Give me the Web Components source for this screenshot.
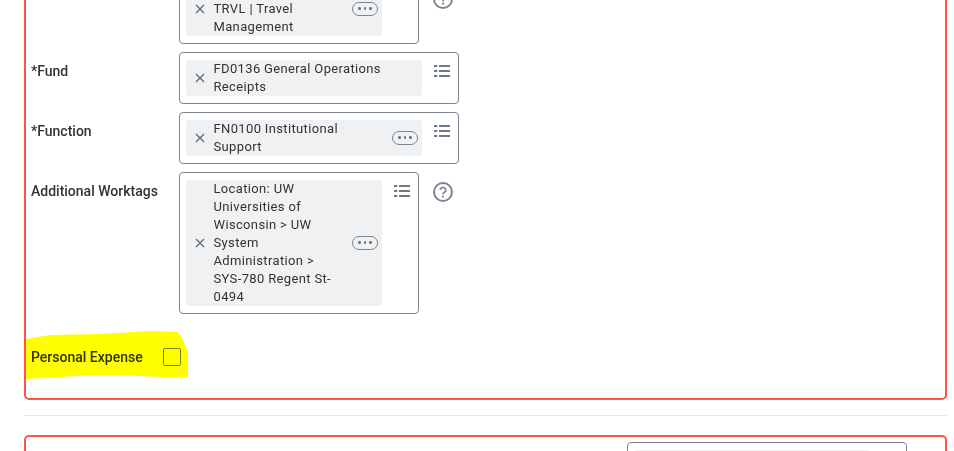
<!DOCTYPE html>
<html>
<head>
<meta charset="utf-8">
<style>
  html, body { margin: 0; height: 451px; overflow: hidden; background: #fff; }
  body { font-family: Roboto, "Liberation Sans", sans-serif; color: #333; }
</style>
</head>
<body>
<expense-page>
  <expense-card>
    <form-field label="" style="--help-top: 15px">
      <tag-box width="240">
        <tag-chip more><br>TRVL | Travel Management</tag-chip>
      </tag-box>
      <help-icon slot="after"></help-icon>
    </form-field>
    <form-field label="*Fund">
      <tag-box width="280" list>
        <tag-chip>FD0136 General Operations Receipts</tag-chip>
      </tag-box>
    </form-field>
    <form-field label="*Function">
      <tag-box width="280" list>
        <tag-chip more>FN0100 Institutional Support</tag-chip>
      </tag-box>
    </form-field>
    <form-field label="Additional Worktags">
      <tag-box width="240" list>
        <tag-chip more>Location: UW Universities of Wisconsin &gt; UW System Administration &gt; SYS-780 Regent St-0494</tag-chip>
      </tag-box>
      <help-icon slot="after"></help-icon>
    </form-field>
    <check-field label="Personal Expense"></check-field>
  </expense-card>
  <expense-card end>
    <tag-box width="280" list>
      <tag-chip></tag-chip>
    </tag-box>
  </expense-card>
</expense-page>

<script>
class ExpensePage extends HTMLElement {
  constructor() {
    super();
    this.attachShadow({ mode: "open" }).innerHTML = `
      <style>
        :host { display: flex; flex-direction: column; margin: -56px 7px 0 24px; }
        .line { height: 1px; background: #e6e8ea; margin: 15px 0 19px; }
      </style>
    `;
    // each card gets its own slot, with the divider drawn between them
    const cards = [...this.querySelectorAll("expense-card")];
    cards.forEach((card, i) => {
      const slotName = "card" + i;
      card.slot = slotName;
      const slot = document.createElement("slot");
      slot.name = slotName;
      this.shadowRoot.appendChild(slot);
      if (i < cards.length - 1) {
        const line = document.createElement("div");
        line.className = "line";
        this.shadowRoot.appendChild(line);
      }
    });
  }
}

class ExpenseCard extends HTMLElement {
  constructor() {
    super();
    this.attachShadow({ mode: "open" }).innerHTML = `
      <style>
        :host {
          display: flex;
          flex-direction: column;
          gap: 8px;
          box-sizing: border-box;
          border: 2px solid #ff5347;
          border-radius: 5px;
          padding: 28px 38px 0 5px;
        }
        :host([end]) { align-items: flex-end; padding-top: 5px; }
      </style>
      <slot></slot>
    `;
  }
}

class FormField extends HTMLElement {
  constructor() {
    super();
    this.attachShadow({ mode: "open" }).innerHTML = `
      <style>
        :host { display: flex; align-items: flex-start; }
        .label {
          width: 148px;
          padding-top: 10px;
          font-size: 14px;
          font-weight: 500;
          line-height: 18px;
          color: #333;
        }
        .after { margin-left: 14px; padding-top: var(--help-top, 10px); display: flex; }
      </style>
      <div class="label"></div>
      <slot></slot>
      <div class="after"><slot name="after"></slot></div>
    `;
    this.shadowRoot.querySelector(".label").textContent = this.getAttribute("label");
  }
}

class TagBox extends HTMLElement {
  constructor() {
    super();
    this.attachShadow({ mode: "open" }).innerHTML = `
      <style>
        :host {
          display: flex;
          align-items: flex-start;
          box-sizing: border-box;
          border: 1px solid #7b858f;
          border-radius: 4px;
          padding: 7px 7px 7px 6px;
          background: #fff;
        }
        .tags { flex: 1; min-width: 0; }
        svg { flex: none; display: block; width: 18px; height: 18px; margin-left: 11px; margin-top: 2px; }
      </style>
      <div class="tags"><slot></slot></div>
      <svg viewBox="0 0 18 18" fill="#6f7a85">
        <path d="M1 3.1h3.3v1.8H1zM6 3.1h11v1.8H6zM1 8.1h3.3v1.8H1zM6 8.1h11v1.8H6zM1 13.1h3.3v1.8H1zM6 13.1h11v1.8H6z"/>
      </svg>
    `;
    this.style.width = this.getAttribute("width") + "px";
  }
}

class TagChip extends HTMLElement {
  constructor() {
    super();
    this.attachShadow({ mode: "open" }).innerHTML = `
      <style>
        :host {
          display: flex;
          align-items: center;
          min-height: 36px;
          background: #f0f1f2;
          border-radius: 3px;
          font-size: 13px;
          line-height: 18px;
          letter-spacing: 0.35px;
          color: #333;
        }
        .x { flex: none; width: 10px; height: 10px; margin: 0 8.5px 0 9px; }
        .text { flex: 1; min-width: 0; padding-right: 6px; }
        .more {
          flex: none;
          display: none;
          box-sizing: border-box;
          width: 26px;
          height: 14px;
          margin: -1px 4px 0 3px;
          border: 1px solid #7b858f;
          border-radius: 7px;
          align-items: center;
          justify-content: center;
          gap: 3px;
        }
        .more i { width: 2.4px; height: 2.4px; border-radius: 50%; background: #6f7a85; }
        :host([more]) .more { display: flex; }
      </style>
      <svg class="x" viewBox="0 0 10 10" stroke="#5e6a75" stroke-width="1.3" fill="none">
        <path d="M1 1l8 8M9 1l-8 8"/>
      </svg>
      <div class="text"><slot></slot></div>
      <div class="more"><i></i><i></i><i></i></div>
    `;
  }
}

class HelpIcon extends HTMLElement {
  constructor() {
    super();
    this.attachShadow({ mode: "open" }).innerHTML = `
      <style>
        :host { display: block; width: 20px; height: 20px; }
        svg { display: block; }
      </style>
      <svg width="20" height="20" viewBox="0 0 20 20" fill="none" stroke="#7b858f" stroke-width="2">
        <circle cx="10" cy="10" r="9"/>
        <path d="M7.2 8a2.8 2.6 0 1 1 4.3 2.2c-1 .6-1.5 1.1-1.5 2" stroke-width="1.7"/>
        <circle cx="10" cy="14.6" r="1.1" fill="#7b858f" stroke="none"/>
      </svg>
    `;
  }
}

class CheckField extends HTMLElement {
  constructor() {
    super();
    this.attachShadow({ mode: "open" }).innerHTML = `
      <style>
        :host {
          display: flex;
          align-items: center;
          position: relative;
          gap: 20px;
          margin: 19px 0 25px;
          height: 32px;
          font-size: 14px;
          font-weight: 500;
          line-height: 18px;
          color: #333;
        }
        .box {
          width: 18px;
          height: 18px;
          box-sizing: border-box;
          border: 1px solid #7b858f;
          border-radius: 2px;
          background: #fff;
        }
        .marker {
          position: absolute;
          left: -5px;
          top: -11px;
          mix-blend-mode: multiply;
          pointer-events: none;
        }
      </style>
      <span class="label"></span>
      <span class="box"></span>
      <svg class="marker" width="163" height="50" viewBox="0 0 163 50">
        <path fill="#ffff00" d="M0 9L24 5L74 4L124 1L152 2L157 10L162 22L162 47L137 47L89 45L69 45L34 47L0 49Z"/>
      </svg>
    `;
    this.shadowRoot.querySelector(".label").textContent = this.getAttribute("label");
  }
}

customElements.define("expense-page", ExpensePage);
customElements.define("expense-card", ExpenseCard);
customElements.define("form-field", FormField);
customElements.define("tag-box", TagBox);
customElements.define("tag-chip", TagChip);
customElements.define("help-icon", HelpIcon);
customElements.define("check-field", CheckField);
</script>
</body>
</html>
